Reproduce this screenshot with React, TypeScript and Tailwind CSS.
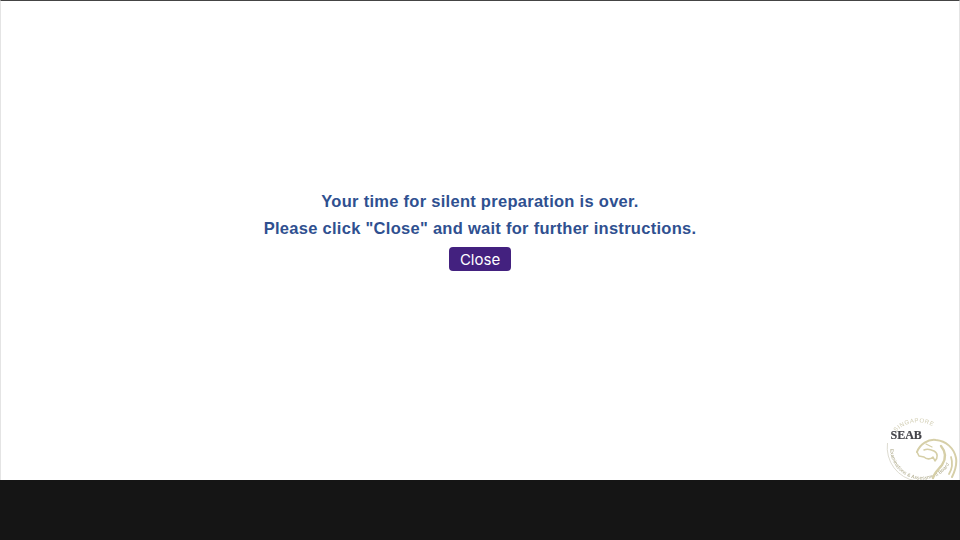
const SeabLogo = () => {
    return (
        <svg viewBox="0 0 72 72" className="absolute left-[886px] top-[415px] h-[72px] w-[72px] blur-[0.5px]">
            <defs>
                <path id="sealTop" d="M 10 17 A 30 30 0 0 1 54 17" fill="none" />
                <path id="sealBottom" d="M 4 31 A 32 32 0 0 0 65 46" fill="none" />
            </defs>
            {/* Seal ring */}
            <path d="M 1.5 28 A 34 34 0 0 0 30 66" fill="none" stroke="#d4d2c4" strokeWidth="0.8" />
            <text fontFamily="'Liberation Sans', sans-serif" fontSize="6" fill="#d2ceb4" letterSpacing="0.5">
                <textPath href="#sealTop">SINGAPORE</textPath>
            </text>
            <text fontFamily="'Liberation Sans', sans-serif" fontSize="5" fill="#a9a483" letterSpacing="0.1">
                <textPath href="#sealBottom" startOffset="3">Examinations &amp; Assessment Board</textPath>
            </text>
            {/* Lion head */}
            <g fill="none" stroke="#d6cfa8" strokeLinecap="round" strokeLinejoin="round">
                <path strokeWidth="2" d="M 31 37 C 34 29 42 24 50 25 C 60 26 68 33 70 43 C 71 49 69 56 66 62" />
                <path strokeWidth="1.6" d="M 31 37 L 33 41 L 38 42 C 41 45 45 44 47 42 L 49 46 C 52 43 52 38 48 36 C 44 34 40 34 38 35" />
                <path strokeWidth="2.4" d="M 55 31 C 60 37 60 44 56 50 C 52 55 48 58 47 63" />
                <path strokeWidth="1.8" d="M 65 42 C 67 48 66 54 63 59" />
                <path strokeWidth="1.2" d="M 40 29 L 46 32" />
            </g>
            <text x="4.5" y="24" fontFamily="'Liberation Serif', serif" fontSize="12" fontWeight="700" fill="#44444a" stroke="#44444a" strokeWidth="0.2">
                SEAB
            </text>
        </svg>
    )
}

const App = () => {
    return (
        <div className="relative flex h-[540px] w-[960px] flex-col overflow-hidden bg-[#151515] font-['Liberation_Sans',sans-serif]">
            {/* Exam window */}
            <main className="flex h-[480px] flex-col items-center border-x border-t border-x-[#e4e4e4] border-t-[#444444] bg-white pt-[190px]">
                <p className="text-[16.5px] leading-[21px] font-bold tracking-[0.28px] text-[#2f5090]">
                    Your time for silent preparation is over.
                </p>
                <p className="mt-[6px] text-[16.5px] leading-[21px] font-bold tracking-[0.28px] text-[#2f5090]">
                    Please click "Close" and wait for further instructions.
                </p>
                <button className="mt-[8px] flex h-[24px] w-[62px] items-center justify-center rounded-[4px] bg-[#43217f] pt-[2px] font-['Inter',sans-serif] text-[15px] text-white">
                    Close
                </button>
            </main>
            <SeabLogo />
            {/* Bottom bar covers the lower edge of the seal */}
            <div className="relative z-10 h-[60px] bg-[#151515]"></div>
        </div>
    )
}

export default App
